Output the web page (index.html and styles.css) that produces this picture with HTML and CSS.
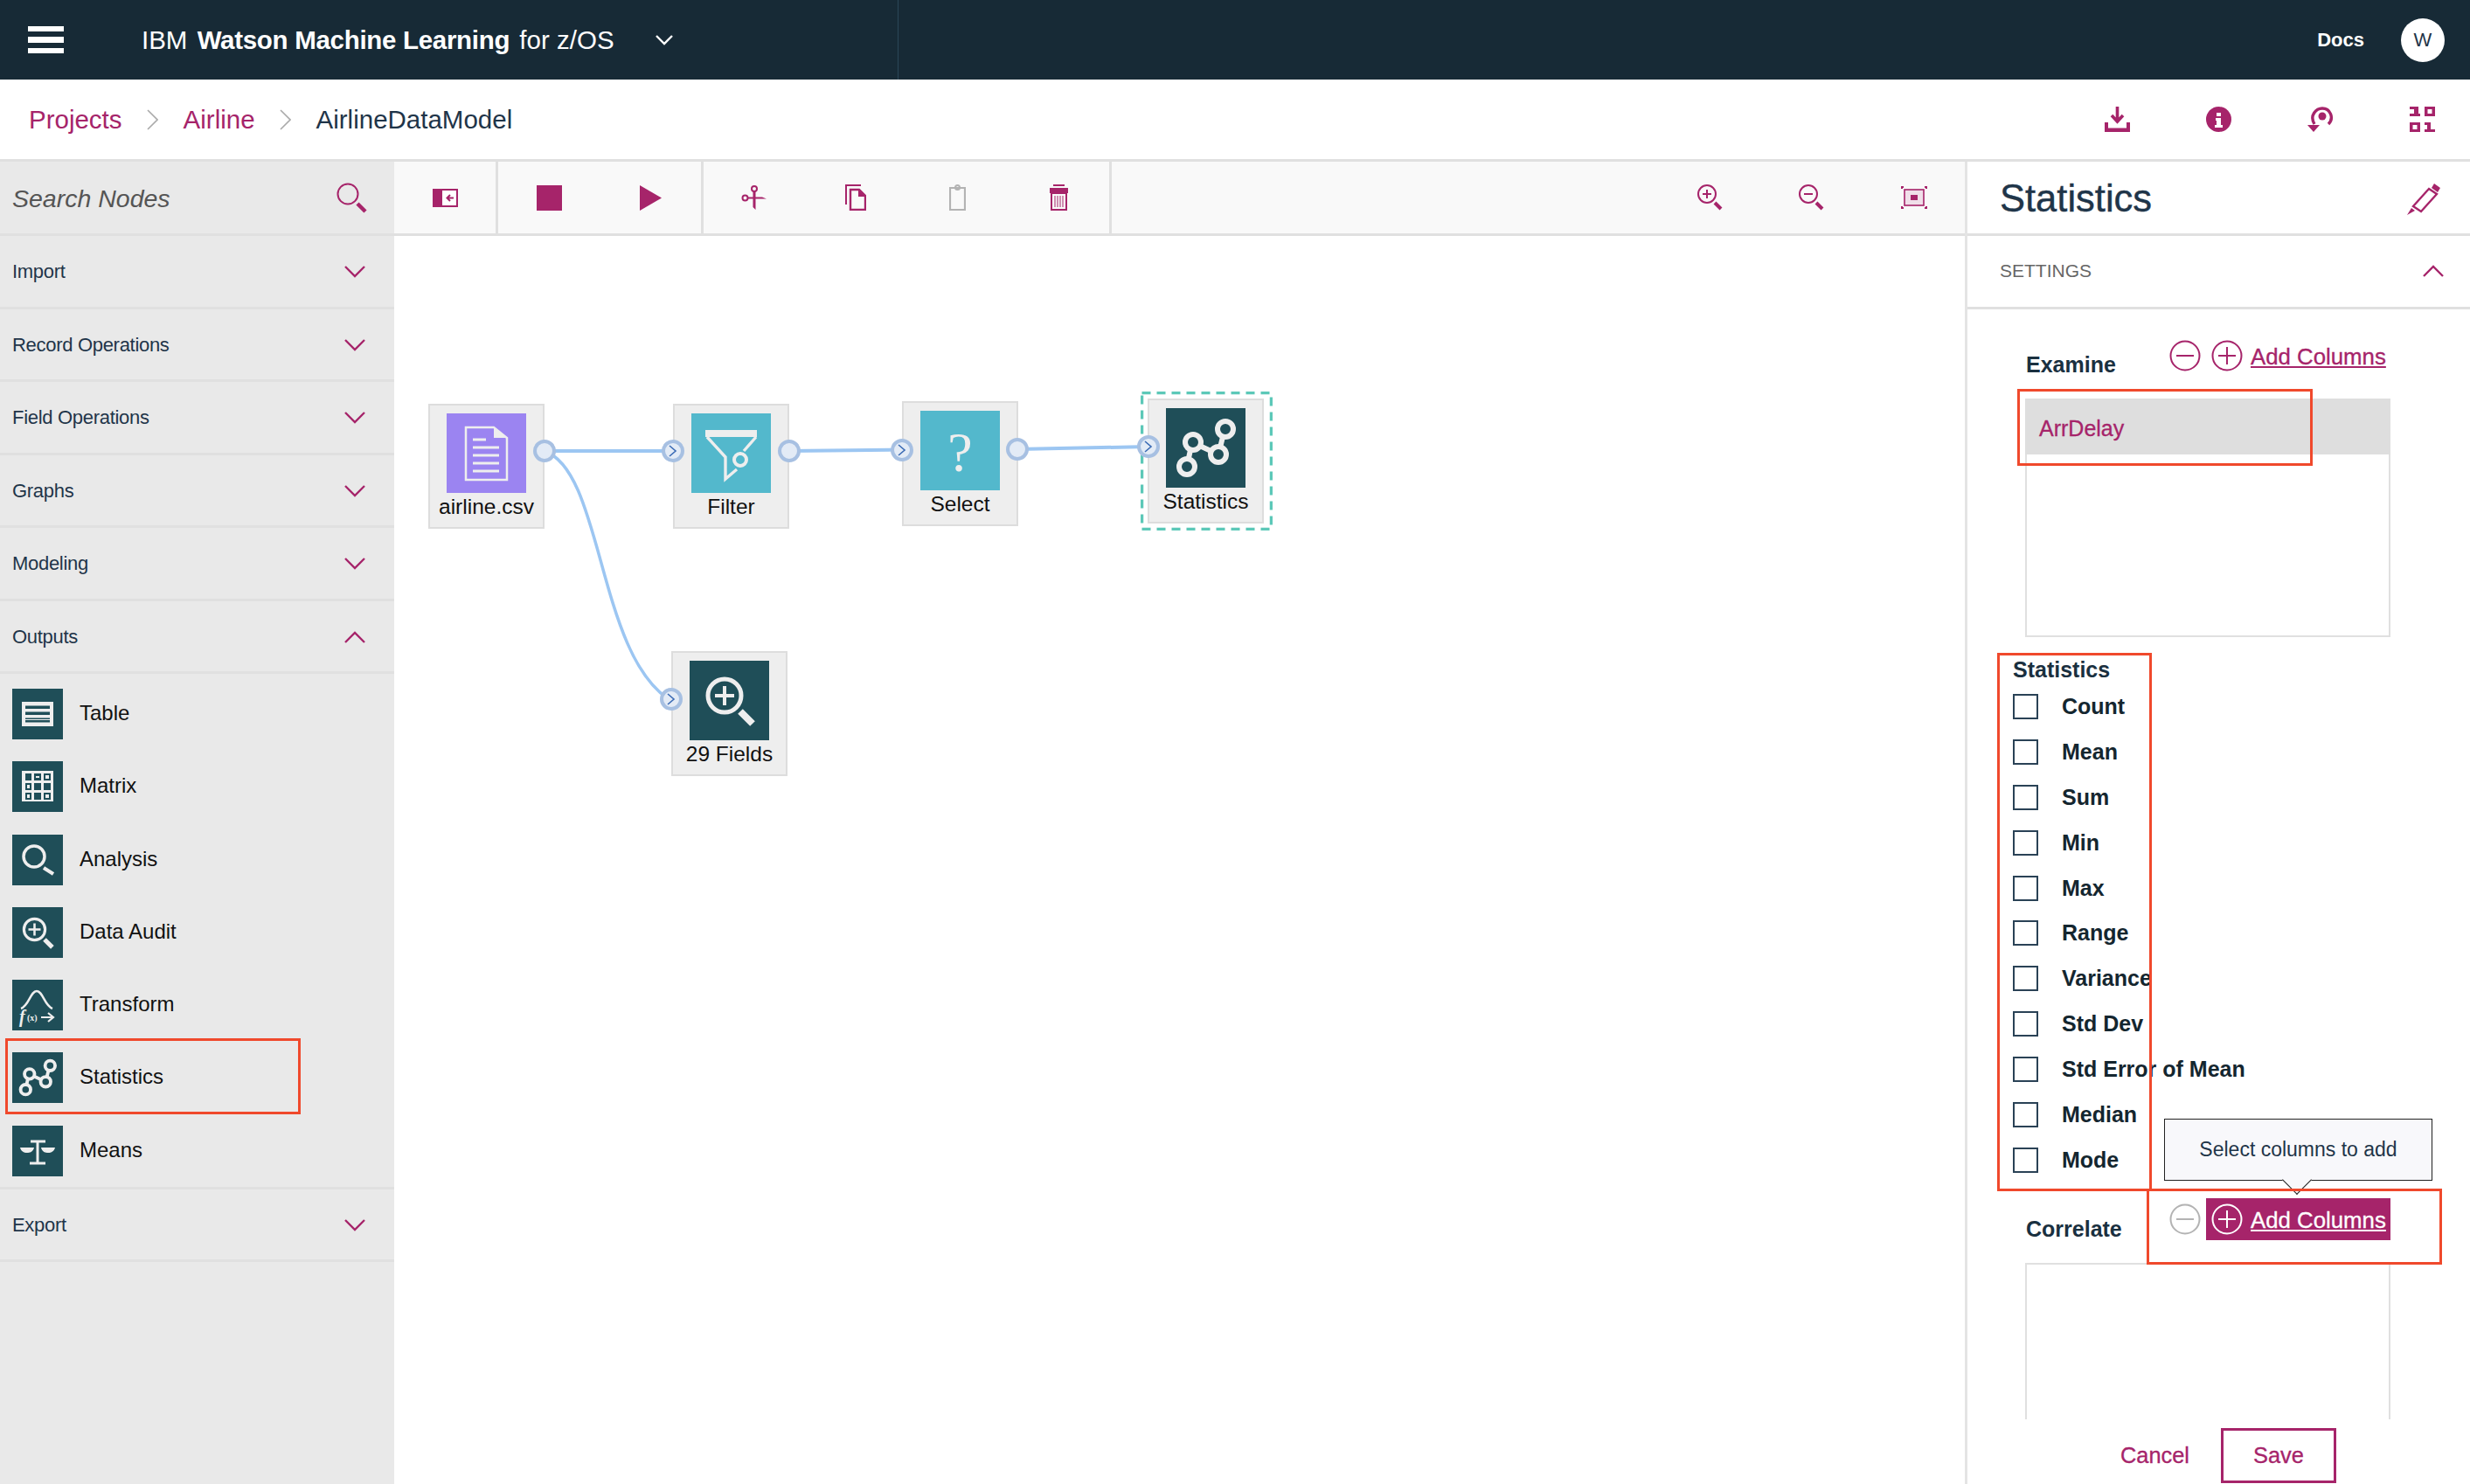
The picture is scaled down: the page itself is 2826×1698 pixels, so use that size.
FILE: index.html
```html
<!DOCTYPE html>
<html lang="en">
<head>
    <meta charset="UTF-8">
    <title>IBM Watson Machine Learning for z/OS</title>
    <link rel="stylesheet" href="styles.css">
</head>
<body>
    <svg class="sprites" width="0" height="0">
        <symbol id="i-stats" viewBox="0 0 91 91">
            <path d="M67 25 60 53 30 39 24 66" fill="none" stroke="#eee" stroke-width="6"/>
            <circle cx="68" cy="24" r="9" fill="#1f4e58" stroke="#eee" stroke-width="6"/>
            <circle cx="31" cy="39" r="9" fill="#1f4e58" stroke="#eee" stroke-width="6"/>
            <circle cx="60" cy="53" r="9" fill="#1f4e58" stroke="#eee" stroke-width="6"/>
            <circle cx="24" cy="67" r="9" fill="#1f4e58" stroke="#eee" stroke-width="6"/>
        </symbol>
        <symbol id="i-audit" viewBox="0 0 91 91">
            <circle cx="40" cy="40" r="19" fill="none" stroke="#eee" stroke-width="5"/>
            <path d="M40 29V51M29 40H51" stroke="#eee" stroke-width="4"/>
            <path d="M58 58 72 72" stroke="#eee" stroke-width="8"/>
        </symbol>
        <symbol id="i-plus" viewBox="0 0 36 36">
            <circle cx="18" cy="18" r="16.5" fill="none" stroke="currentColor" stroke-width="2"/>
            <path d="M18 8V28M8 18H28" stroke="currentColor" stroke-width="2"/>
        </symbol>
        <symbol id="i-minus" viewBox="0 0 36 36">
            <circle cx="18" cy="18" r="16.5" fill="none" stroke="currentColor" stroke-width="2"/>
            <path d="M8 18H28" stroke="currentColor" stroke-width="2"/>
        </symbol>
        <symbol id="i-down" viewBox="0 0 24 14">
            <path d="M1 1 12 12 23 1" fill="none" stroke="#a6246a" stroke-width="2.4"/>
        </symbol>
        <symbol id="i-up" viewBox="0 0 24 14">
            <path d="M1 13 12 2 23 13" fill="none" stroke="#a6246a" stroke-width="2.4"/>
        </symbol>
    </svg>

    <header class="topbar">
        <div class="burger"><span></span><span></span><span></span></div>
        <div class="brand">IBM <b>Watson Machine Learning</b> for z/OS</div>
        <svg class="brand-caret" width="20" height="12" viewBox="0 0 20 12"><path d="M1 1 10 10 19 1" fill="none" stroke="#fff" stroke-width="2.4"/></svg>
        <div class="topbar-line"></div>
        <a class="docs">Docs</a>
        <div class="avatar">W</div>
    </header>

    <nav class="crumbs">
        <a class="crumb">Projects</a>
        <svg class="crumb-sep" width="13" height="24" viewBox="0 0 13 24"><path d="M1 1 12 12 1 23" fill="none" stroke="#aaa" stroke-width="1.6"/></svg>
        <a class="crumb">Airline</a>
        <svg class="crumb-sep" width="13" height="24" viewBox="0 0 13 24"><path d="M1 1 12 12 1 23" fill="none" stroke="#aaa" stroke-width="1.6"/></svg>
        <span class="crumb-current">AirlineDataModel</span>
        <div class="crumb-actions">
            <svg width="29" height="29" viewBox="0 0 29 29" class="mg"><path d="M14.5 0V16M8 10 14.5 17 21 10" fill="none" stroke="currentColor" stroke-width="3.6"/><path d="M0 18H4V24.500H25V18H29V29H0Z" fill="currentColor"/></svg>
            <svg width="29" height="29" viewBox="0 0 29 29" class="mg"><circle cx="14.500" cy="14.500" r="14.500" fill="currentColor"/><path d="M12 7h5v4h-5zM11 13h6v8h2v3h-9v-3h2v-5h-1z" fill="#fff"/></svg>
            <svg width="30" height="29" viewBox="0 0 30 29" class="mg"><path d="M8 20C2 10 10 2 17 2 26 2 31 13 24 20" fill="none" stroke="currentColor" stroke-width="3.4"/><circle cx="17" cy="11" r="4.500" fill="currentColor"/><path d="M0 21H14L7 29Z" fill="currentColor"/></svg>
            <svg width="29" height="29" viewBox="0 0 29 29" class="mg"><path d="M0 0H10V8H12V11H0V8H5V3H0ZM17 0H29V11H17ZM20.500 3V8H25.500V3ZM0 18H12V29H0ZM3.500 21V26H8.500V21ZM17 18H24V26H29V29H17V26H20V21H17Z" fill="currentColor" fill-rule="evenodd"/></svg>
        </div>
    </nav>

    <main class="workspace">
        <aside class="palette">
            <div class="search-row">
                <span class="search-text">Search Nodes</span>
                <svg width="36" height="36" viewBox="0 0 36 36"><circle cx="13" cy="13" r="11.500" fill="none" stroke="#a6246a" stroke-width="2"/><path d="M24 24 33 33" stroke="#a6246a" stroke-width="4.500"/></svg>
            </div>
            <div class="cat"><span>Import</span><svg width="24" height="14"><use href="#i-down"/></svg></div>
            <div class="cat"><span>Record Operations</span><svg width="24" height="14"><use href="#i-down"/></svg></div>
            <div class="cat"><span>Field Operations</span><svg width="24" height="14"><use href="#i-down"/></svg></div>
            <div class="cat"><span>Graphs</span><svg width="24" height="14"><use href="#i-down"/></svg></div>
            <div class="cat"><span>Modeling</span><svg width="24" height="14"><use href="#i-down"/></svg></div>
            <div class="cat"><span>Outputs</span><svg width="24" height="14"><use href="#i-up"/></svg></div>
            <div class="cat-items">
                <div class="pal-item">
                    <svg class="pal-icon" viewBox="0 0 58 58"><path d="M11 15H47V43H11Z" fill="#eee"/><path d="M15 19.500H43V23H15ZM15 26.500H43V30H15ZM15 33.500H43V38.500H15Z" fill="#1f4e58"/><path d="M15 35.500H43" stroke="#eee" stroke-width="1"/></svg>
                    <span>Table</span>
                </div>
                <div class="pal-item">
                    <svg class="pal-icon" viewBox="0 0 58 58"><path d="M11 11H47V46H11Z" fill="#eee"/><path d="M15 14H22V22H15ZM25 14H33V22H25ZM36 14H44V22H36ZM15 25H22V33H15ZM25 25H33V33H25ZM36 25H44V33H36ZM15 36H22V44H15ZM25 36H33V44H25ZM36 36H44V44H36Z" fill="#1f4e58"/><path d="M27 17H31V19H27ZM38 16H42V20H38ZM17 27H20V31H17ZM17 38H20V42H17ZM38 38H42V42H38Z" fill="#eee"/></svg>
                    <span>Matrix</span>
                </div>
                <div class="pal-item">
                    <svg class="pal-icon" viewBox="0 0 58 58"><circle cx="25" cy="25" r="12" fill="none" stroke="#eee" stroke-width="3.500"/><path d="M36 38 47 45" stroke="#eee" stroke-width="4"/></svg>
                    <span>Analysis</span>
                </div>
                <div class="pal-item">
                    <svg class="pal-icon"><use href="#i-audit"/></svg>
                    <span>Data Audit</span>
                </div>
                <div class="pal-item">
                    <svg class="pal-icon" viewBox="0 0 58 58"><path d="M10 33C19 30 21 13 28 13 35 13 37 30 46 33" fill="none" stroke="#eee" stroke-width="2.500"/><text x="8" y="49" class="fx-f">f</text><text x="17" y="47" class="fx-x">(x)</text><path d="M33 43H47M41 38 47 43 41 48" fill="none" stroke="#eee" stroke-width="2.200"/></svg>
                    <span>Transform</span>
                </div>
                <div class="pal-item">
                    <svg class="pal-icon"><use href="#i-stats"/></svg>
                    <span>Statistics</span>
                </div>
                <div class="pal-item">
                    <svg class="pal-icon" viewBox="0 0 58 58"><path d="M21 18H38M29 18V43M20 43H38" fill="none" stroke="#eee" stroke-width="3"/><path d="M9 25H25C24 30 20 31 17 31 13 31 10 29 9 25ZM33 25H49C48 29 45 31 41 31 38 31 34 30 33 25Z" fill="#eee"/></svg>
                    <span>Means</span>
                </div>
            </div>
            <div class="cat"><span>Export</span><svg width="24" height="14"><use href="#i-down"/></svg></div>
            <div class="mark mark-palette"></div>
        </aside>

        <section class="editor">
            <div class="toolbar">
                <div class="tool-group">
                    <div class="tool"><svg width="29" height="21" viewBox="0 0 29 21"><path d="M0 0H29V21H0Z" fill="#a6246a"/><path d="M11 2H27V19H11Z" fill="#fff"/><path d="M24 10.500H17M20 7 16.500 10.500 20 14" fill="none" stroke="#a6246a" stroke-width="2"/></svg></div>
                </div>
                <div class="tool-group">
                    <div class="tool"><div class="stop-shape"></div></div>
                    <div class="tool"><svg width="25" height="29" viewBox="0 0 25 29"><path d="M0 0 25 14.500 0 29Z" fill="#a6246a"/></svg></div>
                </div>
                <div class="tool-group">
                    <div class="tool"><svg width="30" height="30" viewBox="0 0 30 30"><circle cx="15" cy="5" r="3" fill="none" stroke="#a6246a" stroke-width="2"/><circle cx="4.500" cy="15.500" r="3" fill="none" stroke="#a6246a" stroke-width="2"/><path d="M13.500 8H16.500V29L13.500 26ZM7 14.500H24L29 16.500H7Z" fill="#a6246a"/></svg></div>
                    <div class="tool"><svg width="24" height="30" viewBox="0 0 24 30"><path d="M1 23V1H18" fill="none" stroke="#a6246a" stroke-width="2"/><path d="M6 6H16L23 13V29H6Z" fill="none" stroke="#a6246a" stroke-width="2.400"/><path d="M15 6 23 14H15Z" fill="#a6246a"/></svg></div>
                    <div class="tool"><svg width="19" height="30" viewBox="0 0 19 30"><path d="M1 4H18V29H1Z" fill="none" stroke="#b3b3b3" stroke-width="2.200"/><circle cx="9.500" cy="3.500" r="2.500" fill="none" stroke="#b3b3b3" stroke-width="2"/></svg></div>
                    <div class="tool"><svg width="21" height="30" viewBox="0 0 21 30"><path d="M4 0H17V2H4ZM0 4H21V10H0Z" fill="#a6246a"/><path d="M2 10H19V29H2Z" fill="none" stroke="#a6246a" stroke-width="2"/><path d="M6 13V26M9 13V26M12 13V26M15 13V26" stroke="#a6246a" stroke-width="1"/></svg></div>
                </div>
                <div class="tool-group tool-group-end">
                    <div class="tool"><svg width="30" height="30" viewBox="0 0 30 30"><circle cx="11" cy="11" r="10" fill="none" stroke="#a6246a" stroke-width="2"/><path d="M11 6V16M6 11H16" stroke="#a6246a" stroke-width="2"/><path d="M20 21 27 28" stroke="#a6246a" stroke-width="4"/></svg></div>
                    <div class="tool"><svg width="30" height="30" viewBox="0 0 30 30"><circle cx="11" cy="11" r="10" fill="none" stroke="#a6246a" stroke-width="2"/><path d="M6 11H16" stroke="#a6246a" stroke-width="2"/><path d="M20 21 27 28" stroke="#a6246a" stroke-width="4"/></svg></div>
                    <div class="tool"><svg width="30" height="26" viewBox="0 0 30 26"><path d="M1 3V1H3M27 1H29V3M1 23V25H3M27 25H29V23" fill="none" stroke="#a6246a" stroke-width="2"/><rect x="4" y="4" width="22" height="18" fill="#f0dfe9" stroke="#a6246a" stroke-width="1.600"/><rect x="11" y="10" width="8" height="6" fill="#a6246a"/></svg></div>
                </div>
            </div>

            <div class="canvas">
                <svg class="links" width="1800" height="1240">
                    <path d="M172 246H319M452 246 581 244.500M713 244 863 241"/>
                    <path class="link-curve" d="M172 246C240 270 232 480 317 532"/>
                </svg>

                <div class="node node-airline">
                    <svg class="node-icon node-purple" viewBox="0 0 91 91"><path d="M22 16H54L69 28V76H22Z" fill="none" stroke="#eee" stroke-width="2.500"/><path d="M54 16V28H69Z" fill="#eee"/><path d="M30 30H45M30 39H60M30 48H60M30 57H60M30 66H60" stroke="#eee" stroke-width="3"/></svg>
                    <span>airline.csv</span>
                </div>
                <div class="node node-filter">
                    <svg class="node-icon node-teal" viewBox="0 0 91 91"><path d="M17 23H74M18 27 39 50V75L52 64M74 27 60 43" fill="none" stroke="#eee" stroke-width="3.400"/><path d="M16 19H75V27H16Z" fill="#eee"/><circle cx="56" cy="53" r="7" fill="none" stroke="#eee" stroke-width="4"/></svg>
                    <span>Filter</span>
                </div>
                <div class="node node-select">
                    <svg class="node-icon node-teal" viewBox="0 0 91 91"><text x="45.500" y="69" class="question">?</text></svg>
                    <span>Select</span>
                </div>
                <div class="node node-stats">
                    <svg class="node-icon node-dark"><use href="#i-stats"/></svg>
                    <span>Statistics</span>
                </div>
                <svg class="node-dashed" width="151" height="159"><rect x="1.500" y="1.500" width="148" height="156"/></svg>
                <div class="node node-fields">
                    <svg class="node-icon node-dark"><use href="#i-audit"/></svg>
                    <span>29 Fields</span>
                </div>

                <div class="port port-out port-a"></div>
                <div class="port port-in port-b"><svg width="10" height="14" viewBox="0 0 10 14"><path d="M1 1 8 7 1 13" fill="none" stroke="#3b6bb5" stroke-width="1.600"/></svg></div>
                <div class="port port-out port-c"></div>
                <div class="port port-in port-d"><svg width="10" height="14" viewBox="0 0 10 14"><path d="M1 1 8 7 1 13" fill="none" stroke="#3b6bb5" stroke-width="1.600"/></svg></div>
                <div class="port port-out port-e"></div>
                <div class="port port-in port-f"><svg width="10" height="14" viewBox="0 0 10 14"><path d="M1 1 8 7 1 13" fill="none" stroke="#3b6bb5" stroke-width="1.600"/></svg></div>
                <div class="port port-in port-g"><svg width="10" height="14" viewBox="0 0 10 14"><path d="M1 1 8 7 1 13" fill="none" stroke="#3b6bb5" stroke-width="1.600"/></svg></div>
            </div>
        </section>

        <aside class="panel">
            <div class="panel-head">
                <h2>Statistics</h2>
                <svg width="40" height="38" viewBox="0 0 40 38"><path d="M26 8 35 14 17 34 8 28Z" fill="none" stroke="#a6246a" stroke-width="2.400"/><path d="M32 2 39 7 36 12 29 7ZM6 30 10 33 1 38Z" fill="#a6246a"/></svg>
            </div>
            <div class="panel-section">
                <span>SETTINGS</span>
                <svg width="24" height="14"><use href="#i-up"/></svg>
            </div>
            <div class="panel-body">
                <div class="field-head field-head-first">
                    <label class="field-label">Examine</label>
                    <svg class="round-icon" width="36" height="36"><use href="#i-minus"/></svg>
                    <a class="add-btn">
                        <svg width="36" height="36"><use href="#i-plus"/></svg>
                        <span>Add Columns</span>
                    </a>
                </div>
                <div class="col-list">
                    <div class="col-row">ArrDelay</div>
                </div>

                <div class="stat-block">
                    <div class="stat-title">Statistics</div>
                    <div class="stat-row"><i></i><span>Count</span></div>
                    <div class="stat-row"><i></i><span>Mean</span></div>
                    <div class="stat-row"><i></i><span>Sum</span></div>
                    <div class="stat-row"><i></i><span>Min</span></div>
                    <div class="stat-row"><i></i><span>Max</span></div>
                    <div class="stat-row"><i></i><span>Range</span></div>
                    <div class="stat-row"><i></i><span>Variance</span></div>
                    <div class="stat-row"><i></i><span>Std Dev</span></div>
                    <div class="stat-row"><i></i><span>Std Error of Mean</span></div>
                    <div class="stat-row"><i></i><span>Median</span></div>
                    <div class="stat-row"><i></i><span>Mode</span></div>
                </div>

                <div class="field-head field-head-second">
                    <label class="field-label">Correlate</label>
                    <svg class="round-icon round-icon-off" width="36" height="36"><use href="#i-minus"/></svg>
                    <a class="add-btn add-btn-hover">
                        <svg width="36" height="36"><use href="#i-plus"/></svg>
                        <span>Add Columns</span>
                    </a>
                </div>
                <div class="col-list"></div>
            </div>
            <div class="panel-foot">
                <a class="btn-cancel">Cancel</a>
                <a class="btn-save">Save</a>
            </div>

            <div class="tooltip">Select columns to add</div>
            <div class="mark mark-arrdelay"></div>
            <div class="mark mark-stats"></div>
            <div class="mark mark-add"></div>
        </aside>
    </main>
</body>
</html>
```

FILE: styles.css
```css
* {
    box-sizing: border-box;
}
html, body {
    margin: 0;
    height: 100%;
}
body {
    font-family: "Liberation Sans", Arial, sans-serif;
    display: flex;
    flex-direction: column;
    height: 1698px;
    overflow: hidden;
    background-color: #fff;
    color: #1f3549;
}
.sprites {
    position: absolute;
}
.mg {
    color: #a6246a;
}

/* top bar */
.topbar {
    height: 91px;
    flex: none;
    background-color: #172a36;
    color: #fff;
    display: flex;
    align-items: center;
    padding-left: 32px;
    position: relative;
}
.burger {
    width: 41px;
    display: flex;
    flex-direction: column;
    gap: 6px;
}
.burger span {
    height: 6.5px;
    background-color: #fff;
}
.brand {
    font-size: 29.5px;
    margin-left: 89px;
    white-space: nowrap;
}
.brand b {
    margin: 0 3px;
    letter-spacing: -0.3px;
}
.brand-caret {
    margin-left: 47px;
}
.topbar-line {
    position: absolute;
    left: 1027px;
    top: 0;
    bottom: 0;
    width: 1px;
    background-color: #2b4758;
}
.docs {
    margin-left: auto;
    font-size: 22px;
    font-weight: bold;
    margin-right: 42px;
}
.avatar {
    width: 50px;
    height: 50px;
    border-radius: 50%;
    background-color: #fff;
    color: #1f3549;
    font-size: 22px;
    display: flex;
    align-items: center;
    justify-content: center;
    margin-right: 29px;
}

/* breadcrumb */
.crumbs {
    height: 94px;
    flex: none;
    border-bottom: 3px solid #e0e0e0;
    display: flex;
    align-items: center;
    padding: 0 40px 0 33px;
    font-size: 29.5px;
}
.crumb {
    color: #a6246a;
}
.crumb-sep {
    margin: 0 29px 0 28px;
}
.crumb-current {
    color: #1f3549;
}
.crumb-actions {
    margin-left: auto;
    display: flex;
    gap: 87px;
}

.workspace {
    flex: 1;
    display: flex;
    min-height: 0;
}

/* left palette */
.palette {
    width: 451px;
    flex: none;
    background-color: #e9e9e9;
    position: relative;
}
.search-row {
    height: 85px;
    border-bottom: 3px solid #e0e0e0;
    display: flex;
    align-items: center;
    justify-content: space-between;
    padding: 2px 30px 0 14px;
}
.search-text {
    font-size: 28.5px;
    font-style: italic;
    color: #555;
}
.cat {
    height: 83.5px;
    border-bottom: 3px solid #e0e0e0;
    display: flex;
    align-items: center;
    justify-content: space-between;
    padding: 2px 33px 0 14px;
    font-size: 22px;
    letter-spacing: -0.3px;
    color: #1f3549;
}
.cat-items {
    padding: 17px 0 12px 14px;
    border-bottom: 3px solid #e0e0e0;
    display: flex;
    flex-direction: column;
    gap: 25.3px;
}
.pal-item {
    display: flex;
    align-items: center;
    gap: 19px;
    font-size: 24px;
    color: #111;
}
.pal-item span {
    margin-top: -2px;
}
.pal-icon {
    width: 58px;
    height: 58px;
    background-color: #1f4e58;
}
.fx-f {
    font-family: "Liberation Serif", serif;
    font-style: italic;
    font-weight: bold;
    font-size: 20px;
    fill: #eee;
}
.fx-x {
    font-family: "Liberation Serif", serif;
    font-weight: bold;
    font-size: 10px;
    fill: #eee;
}

/* toolbar and canvas */
.editor {
    flex: 1;
    min-width: 0;
    display: flex;
    flex-direction: column;
}
.toolbar {
    height: 85px;
    flex: none;
    background-color: #f9f9f9;
    border-bottom: 3px solid #e0e0e0;
    display: flex;
}
.tool-group {
    display: flex;
    border-right: 3px solid #e0e0e0;
}
.tool-group-end {
    margin-left: auto;
    border-right: 0;
}
.tool {
    width: 116px;
    display: flex;
    align-items: center;
    justify-content: center;
}
.tool-group-end .tool {
    width: 116.5px;
}
.stop-shape {
    width: 29px;
    height: 29px;
    background-color: #a6246a;
}
.canvas {
    flex: 1;
    position: relative;
    overflow: hidden;
}
.links {
    position: absolute;
    left: 0;
    top: 0;
    fill: none;
    stroke: #9cc6f2;
    stroke-width: 4;
}
.links .link-curve {
    stroke-width: 3.5;
}
.node {
    position: absolute;
    width: 133px;
    height: 143px;
    background-color: #eee;
    border: 2px solid #ddd;
    padding-top: 9px;
    display: flex;
    flex-direction: column;
    align-items: center;
    font-size: 24.5px;
    color: #111;
}
.node span {
    margin-top: 1px;
    line-height: 30px;
}
.node-icon {
    width: 91px;
    height: 91px;
    flex: none;
}
.node-purple {
    background-color: #9b84f1;
}
.node-teal {
    background-color: #53b8cc;
}
.node-dark {
    background-color: #1f4e58;
}
.question {
    font-family: "Liberation Serif", serif;
    font-size: 64px;
    text-anchor: middle;
    fill: #eee;
}
.node-airline {
    left: 39px;
    top: 192px;
}
.node-filter {
    left: 319px;
    top: 192px;
}
.node-select {
    left: 581px;
    top: 189px;
}
.node-stats {
    left: 862px;
    top: 186px;
}
.node-fields {
    left: 317px;
    top: 475px;
}
.node-dashed {
    position: absolute;
    left: 854px;
    top: 178px;
    fill: none;
    stroke: #5cc8b8;
    stroke-width: 3.5;
    stroke-dasharray: 10 7;
}
.port {
    position: absolute;
    width: 26px;
    height: 26px;
    margin: -13px 0 0 -13px;
    border-radius: 50%;
    background-color: #e3ebf6;
    border: 4px solid #a7c0e2;
    display: flex;
    align-items: center;
    justify-content: center;
}
.port-a { left: 172px; top: 246px; }
.port-b { left: 319px; top: 246px; }
.port-c { left: 452px; top: 246px; }
.port-d { left: 581px; top: 245px; }
.port-e { left: 713px; top: 244px; }
.port-f { left: 863px; top: 241px; }
.port-g { left: 317px; top: 530px; }

/* right panel */
.panel {
    width: 578px;
    flex: none;
    border-left: 3px solid #e4e4e4;
    display: flex;
    flex-direction: column;
    position: relative;
}
.panel-head {
    height: 85px;
    flex: none;
    border-bottom: 3px solid #e0e0e0;
    display: flex;
    align-items: center;
    justify-content: space-between;
    padding: 2px 33px 0 37px;
}
.panel-head h2 {
    margin: 0;
    font-size: 43.5px;
    font-weight: normal;
    color: #1f3549;
    -webkit-text-stroke: 0.4px;
}
.panel-section {
    height: 83.5px;
    flex: none;
    border-bottom: 3px solid #e0e0e0;
    display: flex;
    align-items: center;
    justify-content: space-between;
    padding: 0 30px 0 37px;
    font-size: 21px;
    color: #666;
}
.panel-body {
    flex: 1;
    min-height: 0;
    overflow: hidden;
}
.field-head {
    display: flex;
    align-items: flex-start;
    padding-left: 67px;
}
.field-head-first {
    height: 102px;
    padding-top: 29px;
}
.field-head-second {
    height: 91px;
    padding-top: 17px;
}
.field-head-second .field-label {
    margin-top: 20px;
}
.field-label {
    width: 164px;
    font-size: 25px;
    font-weight: bold;
    line-height: 30px;
    margin-top: 19px;
    color: #1a3040;
}
.round-icon {
    margin-top: 6px;
    color: #a6246a;
}
.round-icon-off {
    color: #b3b3b3;
}
.add-btn {
    height: 48px;
    width: 211px;
    margin-left: 6px;
    padding-left: 6px;
    display: flex;
    align-items: center;
    gap: 9px;
    color: #a6246a;
    font-size: 25.8px;
    -webkit-text-stroke: 0.3px;
    white-space: nowrap;
}
.add-btn span {
    margin-top: 4px;
    text-decoration: underline;
    text-underline-offset: 2px;
}
.add-btn-hover {
    background-color: #a6246a;
    color: #fff;
}
.col-list {
    width: 418px;
    height: 273px;
    margin-left: 66px;
    border: 2px solid #e0e0e0;
}
.col-row {
    height: 64px;
    margin: -2px -2px 0;
    padding: 6px 0 0 16px;
    display: flex;
    align-items: center;
    background-color: #dedede;
    color: #a6246a;
    font-size: 25px;
    -webkit-text-stroke: 0.3px;
}
.stat-block {
    padding: 22px 0 0 52px;
    height: 625px;
}
.stat-title {
    font-size: 25px;
    font-weight: bold;
    line-height: 30px;
    margin-bottom: 2px;
    color: #1a3040;
}
.stat-row {
    height: 51.9px;
    display: flex;
    align-items: center;
    gap: 27px;
    font-size: 25px;
    font-weight: bold;
    color: #14262f;
    white-space: nowrap;
}
.stat-row i {
    width: 29px;
    height: 29px;
    flex: none;
    border: 2px solid #2a4256;
}
.panel-foot {
    height: 74px;
    flex: none;
    display: flex;
    align-items: center;
    justify-content: flex-end;
    gap: 36px;
    padding: 8px 153px 0 0;
    font-size: 25.4px;
    color: #a6246a;
    -webkit-text-stroke: 0.3px;
}
.btn-save {
    width: 132px;
    height: 63px;
    border: 3px solid #a6246a;
    display: flex;
    align-items: center;
    justify-content: center;
}

/* annotations over the form */
.tooltip {
    position: absolute;
    left: 225px;
    top: 1095px;
    width: 307px;
    height: 71px;
    background-color: #f8f8fb;
    border: 1.5px solid #222;
    display: flex;
    align-items: center;
    justify-content: center;
    font-size: 23px;
    color: #1f3549;
}
.tooltip::after {
    content: "";
    position: absolute;
    left: 139px;
    top: 57px;
    width: 23px;
    height: 23px;
    border-right: 1.5px solid #222;
    border-bottom: 1.5px solid #222;
    background-color: #f8f8fb;
    transform: rotate(45deg);
}
.mark {
    position: absolute;
    border: 3px solid #f0492c;
}
.mark-palette {
    left: 6px;
    top: 1003px;
    width: 338px;
    height: 87px;
}
.mark-arrdelay {
    left: 57px;
    top: 260px;
    width: 338px;
    height: 88px;
}
.mark-stats {
    left: 34px;
    top: 562px;
    width: 177px;
    height: 616px;
}
.mark-add {
    left: 205px;
    top: 1175px;
    width: 338px;
    height: 87px;
}
```
